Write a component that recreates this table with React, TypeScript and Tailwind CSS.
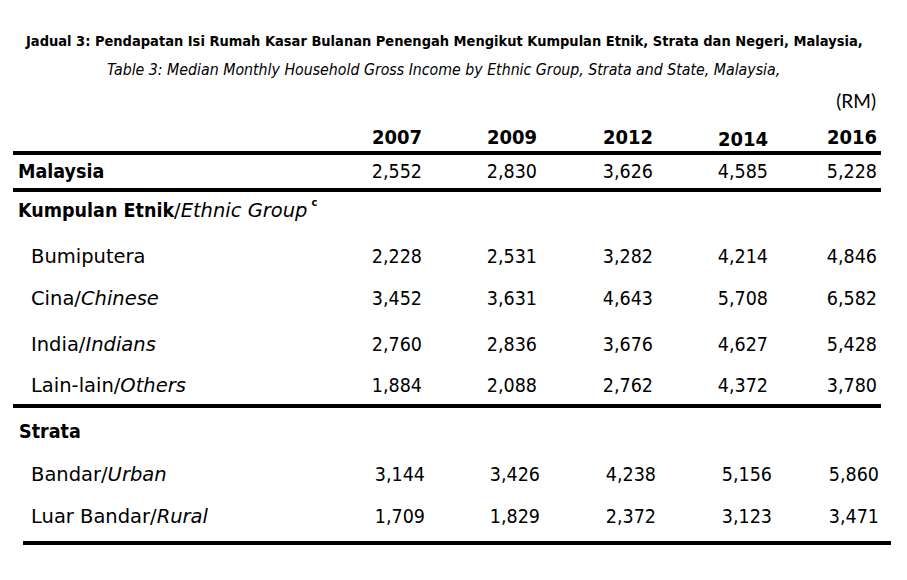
import React from "react";

const FONT = "font-['DejaVu_Sans_Condensed','DejaVu_Sans',sans-serif] font-stretch-condensed";
const WIDE = "font-['DejaVu_Sans',sans-serif] font-stretch-normal";
const GRID = "grid grid-cols-[294px_115px_115px_116px_115px_109px] items-center";
const GRID2 = "grid grid-cols-[297px_115px_115px_116px_116px_107px] items-center";

type Row = { label: React.ReactNode; values: string[]; mt: string };

const ethnic: Row[] = [
  { label: <>Bumiputera</>, values: ["2,228", "2,531", "3,282", "4,214", "4,846"], mt: "mt-[18px]" },
  { label: <>Cina/<i>Chinese</i></>, values: ["3,452", "3,631", "4,643", "5,708", "6,582"], mt: "mt-[14px]" },
  { label: <>India/<i>Indians</i></>, values: ["2,760", "2,836", "3,676", "4,627", "5,428"], mt: "mt-[18px]" },
  { label: <>Lain-lain/<i>Others</i></>, values: ["1,884", "2,088", "2,762", "4,372", "3,780"], mt: "mt-[13px]" },
];

const strata: Row[] = [
  { label: <>Bandar/<i>Urban</i></>, values: ["3,144", "3,426", "4,238", "5,156", "5,860"], mt: "mt-[15px]" },
  { label: <>Luar Bandar/<i>Rural</i></>, values: ["1,709", "1,829", "2,372", "3,123", "3,471"], mt: "mt-[14px]" },
];

function Rule({ cls = "ml-[13px]" }: { cls?: string }) {
  return <div className={`${cls} w-[868px] h-[4px] bg-black`} />;
}

function DataRow({ row, grid }: { row: Row; grid: string }) {
  return (
    <div className={`${row.mt} h-[28px] ml-[13px] w-[868px] ${grid} text-[19.5px] leading-[28px]`}>
      <div className={`pl-[18px] whitespace-nowrap ${WIDE}`}>{row.label}</div>
      {row.values.map((v, i) => (
        <div key={i} className="text-right">{v}</div>
      ))}
    </div>
  );
}

export default function App() {
  const years = ["2007", "2009", "2012", "2014", "2016"];
  return (
    <div className={`w-[907px] h-[580px] bg-white text-black overflow-hidden ${FONT}`}>
      <div className="pt-[29px]">
        <div className="h-[24px] leading-[24px] pl-[26px] text-[14.5px] font-bold whitespace-nowrap">
          Jadual 3: Pendapatan Isi Rumah Kasar Bulanan Penengah Mengikut Kumpulan Etnik, Strata dan Negeri, Malaysia,
        </div>
        <div className="mt-[5px] h-[24px] leading-[24px] pl-[107px] text-[15.75px] italic whitespace-nowrap">
          Table 3: Median Monthly Household Gross Income by Ethnic Group, Strata and State, Malaysia,
        </div>
        <div className="mt-[7px] h-[24px] leading-[24px] flex justify-end pr-[31px] text-[19px] font-['Lato',sans-serif]">
          (RM)
        </div>
        <div className={`h-[38px] pt-[7px] ml-[13px] w-[868px] ${GRID} text-[20px] font-bold leading-[31px]`}>
          <div />
          {years.map((y, i) => (
            <div key={y} className={`text-right ${i === 3 ? "pt-[4px]" : ""}`}>{y}</div>
          ))}
        </div>
      </div>
      <Rule />
      <div className={`h-[33px] ml-[13px] w-[868px] ${GRID} text-[19.5px] leading-[28px]`}>
        <div className="pl-[5px] font-bold">Malaysia</div>
        {["2,552", "2,830", "3,626", "4,585", "5,228"].map((v, i) => (
          <div key={i} className="text-right">{v}</div>
        ))}
      </div>
      <Rule />
      <div className="mt-[5px] h-[28px] ml-[13px] pl-[5px] text-[19.5px] leading-[28px] whitespace-nowrap">
        <b>Kumpulan Etnik</b>
        <span className={WIDE}>
          /<i>Ethnic Group</i>
        </span>
        <span className="inline-block align-top ml-[4px] text-[11px] leading-[11px] font-bold">c</span>
      </div>
      {ethnic.map((r, i) => (
        <DataRow key={i} row={r} grid={GRID} />
      ))}
      <div className="mt-[4px]">
        <Rule />
      </div>
      <div className="mt-[10px] h-[28px] ml-[13px] pl-[6px] text-[19.5px] leading-[28px] font-bold">Strata</div>
      {strata.map((r, i) => (
        <DataRow key={i} row={r} grid={GRID2} />
      ))}
      <div className="mt-[10px]">
        <Rule cls="ml-[23px]" />
      </div>
    </div>
  );
}
